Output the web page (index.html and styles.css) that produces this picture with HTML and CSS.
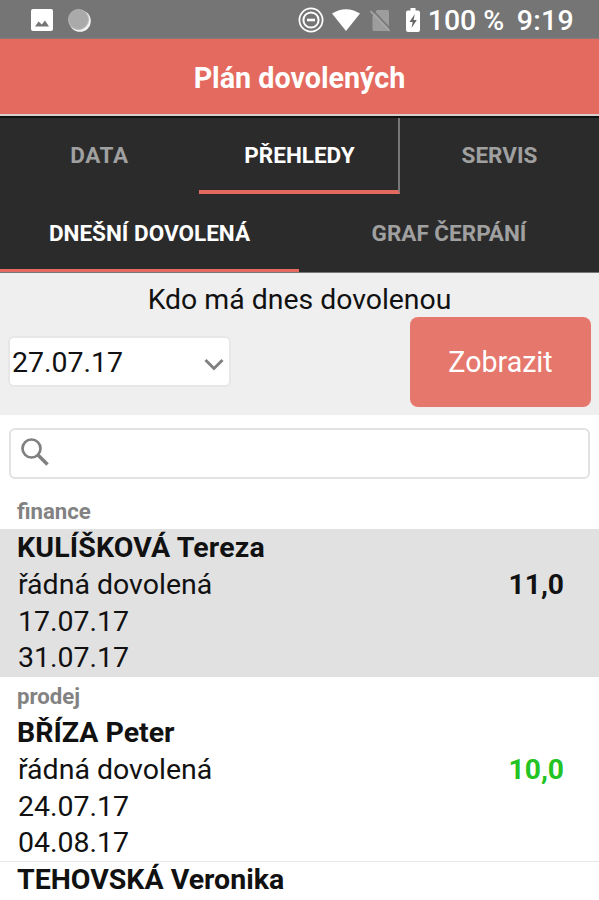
FILE: index.html
```html
<!DOCTYPE html>
<html lang="cs">
<head>
<meta charset="utf-8">
<title>Plán dovolených</title>
<link rel="stylesheet" href="styles.css">
</head>
<body>
<div class="screen">
  <div class="status">
    <svg class="status-picture" width="22" height="22" viewBox="0 0 22 22"><path fill="#fff" fill-rule="evenodd" d="M2 0h18a2 2 0 0 1 2 2v18a2 2 0 0 1-2 2H2a2 2 0 0 1-2-2V2a2 2 0 0 1 2-2zM4 17.500h14l-4-6-3.200 4-3.200-3z"/></svg>
    <svg class="status-disc" width="23" height="23" viewBox="0 0 23 23"><circle cx="12" cy="12" r="10.800" fill="#f2f2f2"/><circle cx="10.500" cy="10.500" r="10" fill="#aaa" stroke="#b4b4b4"/></svg>
    <span class="spacer"></span>
    <svg class="status-dnd" width="26" height="26" viewBox="0 0 26 26" fill="none" stroke="#fff"><circle cx="13" cy="13" r="11.600" stroke-width="1.700"/><circle cx="13" cy="13" r="7.600" stroke-width="2"/><path d="M9 13h8" stroke-width="2.600"/></svg>
    <svg class="status-wifi" width="28" height="22" viewBox="0 0 28 22"><path fill="#fff" d="M0 4.500Q14-4 28 4.500L14 22z"/></svg>
    <svg class="status-sim" width="21" height="23" viewBox="0 0 21 23"><path fill="#9d9d9d" d="M7 1h10.500a1.500 1.500 0 0 1 1.500 1.500V22H4a1.500 1.500 0 0 1-1.500-1.500V7z"/><path d="M2 .5l19 20" stroke="#757575" stroke-width="1.500"/><path d="M.5 2l19 20" stroke="#a8a8a8" stroke-width="1.600"/></svg>
    <svg class="status-battery" width="14" height="24" viewBox="0 0 14 24"><path fill="#fff" d="M4.500 0h5v2.500H12a2 2 0 0 1 2 2V22a2 2 0 0 1-2 2H2a2 2 0 0 1-2-2V4.500a2 2 0 0 1 2-2h2.500z"/><path fill="#666" d="M8.800 6 3.500 14h3.200l-1.200 6L10.800 12H7.600z"/></svg>
    <span class="status-level">100 %</span>
    <span class="status-time">9:19</span>
  </div>
  <header class="title"><span>Plán dovolených</span></header>
  <nav class="tabs tabs-main">
    <div class="tab"><span class="t-data">DATA</span></div>
    <div class="tab active"><span>PŘEHLEDY</span></div>
    <div class="tab"><span>SERVIS</span></div>
  </nav>
  <nav class="tabs tabs-sub">
    <div class="tab active"><span>DNEŠNÍ DOVOLENÁ</span></div>
    <div class="tab"><span>GRAF ČERPÁNÍ</span></div>
  </nav>
  <section class="filter">
    <div class="filter-title">Kdo má dnes dovolenou</div>
    <div class="filter-row">
      <div class="date"><span>27.07.17</span>
        <svg width="20" height="13" viewBox="0 0 20 13"><path d="M1.500 2 10 10.500 18.500 2" fill="none" stroke="#808080" stroke-width="3"/></svg>
      </div>
      <div class="show">Zobrazit</div>
    </div>
  </section>
  <div class="search">
    <svg width="28" height="28" viewBox="0 0 28 28" fill="none" stroke="#808080"><circle cx="10.500" cy="10.500" r="9" stroke-width="2.700"/><path d="M17 17l9.500 9.500" stroke-width="3.500"/></svg>
  </div>
  <div class="group group-first">finance</div>
  <article class="entry selected">
    <div class="lines"><strong class="wide">KULÍŠKOVÁ Tereza</strong><span>řádná dovolená</span><span>17.07.17</span><span>31.07.17</span></div>
    <b class="days">11,0</b>
  </article>
  <div class="group">prodej</div>
  <article class="entry entry-plain">
    <div class="lines"><strong>BŘÍZA Peter</strong><span>řádná dovolená</span><span>24.07.17</span><span>04.08.17</span></div>
    <b class="days green">10,0</b>
  </article>
  <article class="entry divided">
    <div class="lines"><strong>TEHOVSKÁ Veronika</strong></div>
  </article>
</div>
</body>
</html>
```
FILE: styles.css
```css
* { box-sizing: border-box; }
body { margin: 0; background: #fff; font-family: Roboto, sans-serif; color: #111; }
.screen { width: 599px; height: 900px; overflow: hidden; display: flex; flex-direction: column; }
.screen > * { flex-shrink: 0; }
svg { display: block; flex: none; }

.status { height: 39px; background: #757575; border-bottom: 1px solid #8d7a78; display: flex; align-items: center; color: #fff; line-height: 38px; padding: 2px 25px 0 31px; white-space: nowrap; }
.status-disc { margin-left: 15px; }
.spacer { flex: 1; }
.status-wifi { margin-left: 8px; }
.status-sim { margin-left: 10px; }
.status-battery { margin-left: 15px; }
.status-level, .status-time { font-weight: 500; font-size: 28.500px; padding-top: 1px; }
.status-level { margin-left: 8px; width: 81px; }
.status-time { margin-left: 8px; letter-spacing: 0.300px; }

.title { height: 77px; background: #e46a5f; border-bottom: 2px solid #d8cfcd; display: flex; align-items: center; justify-content: center; color: #fff; font-size: 28.700px; font-weight: 700; padding-top: 2px; }

.tabs { display: grid; background: #2b2b2b; }
.tabs-main { height: 78px; grid-template-columns: 199px 201px 199px; border-top: 2px solid #111; }
.tabs-sub { height: 79px; grid-template-columns: 299px 300px; border-bottom: 1px solid #777; }
.tab { display: flex; align-items: center; justify-content: center; color: #a0a0a0; font-size: 22.500px; font-weight: 700; border-bottom: 4px solid transparent; padding-top: 1px; }
.tab.active { color: #fff; border-bottom-color: #e46a5f; }
.tabs-main .tab.active { border-right: 2px solid #777; padding-left: 2px; }
.tabs-sub .tab { border-bottom-width: 3px; padding-top: 3px; }
.t-data { letter-spacing: 0.600px; }

.filter { height: 142px; background: #efefef; }
.filter-title { height: 44px; padding-top: 10px; text-align: center; font-size: 28.400px; line-height: 34px; }
.filter-row { display: flex; justify-content: space-between; align-items: center; padding: 0 8px; }
.date { width: 223px; height: 51px; margin-top: -1px; background: #fff; border: 2px solid #e7e7e7; border-radius: 6px; display: flex; align-items: center; justify-content: space-between; padding: 1px 5px 0 2px; font-size: 28.500px; }
.date svg { margin-top: 4px; }
.show { width: 181px; height: 90px; background: #e6776d; border-radius: 8px; color: #fff; font-size: 28.600px; display: flex; align-items: center; justify-content: center; }

.search { height: 51px; margin: 13px 9px 0; border: 2px solid #e2e2e2; border-radius: 6px; padding: 8px 10px; }
.group { height: 37px; padding-left: 17px; line-height: 38px; font-size: 22.200px; font-weight: 700; color: #828282; }
.group-first { height: 50px; line-height: 64px; }
.entry { height: 148px; display: flex; justify-content: space-between; align-items: flex-start; padding: 0 35px 0 17px; }
.entry.selected { background: #e1e1e1; }
.entry-plain { height: 147px; }
.divided { border-top: 1px solid #e8e8e8; }
.lines { display: flex; flex-direction: column; padding-top: 1px; font-size: 28.500px; line-height: 36.800px; white-space: nowrap; }
.divided .lines { padding-top: 0; }
.lines span { padding-left: 1px; }
.lines strong { font-weight: 700; }
.wide { letter-spacing: 0.150px; }
.days { margin-top: 37px; font-size: 28.200px; line-height: 37px; font-weight: 700; }
.green { color: #22c322; }
```
